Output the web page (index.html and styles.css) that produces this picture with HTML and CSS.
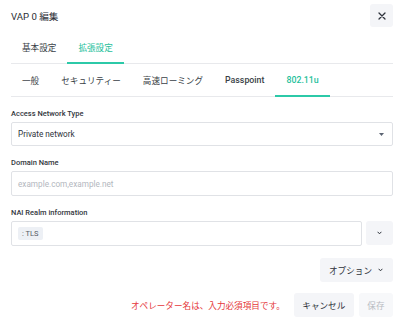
FILE: index.html
```html
<!DOCTYPE html>
<html lang="ja">
<head>
  <meta charset="UTF-8" />
  <meta name="viewport" content="width=device-width, initial-scale=1.0" />
  <title>VAP 0 編集</title>
  <link rel="stylesheet" href="styles.css">
</head>
<body>
  <div class="dialog">
    <!-- Header -->
    <div class="dialog-header">
      <div class="dialog-title">VAP 0 編集</div>
      <button class="icon-btn close-btn" aria-label="close">
        <svg width="8" height="8" viewBox="0 0 8 8"><path d="M1 1L7 7M7 1L1 7" stroke="#2e333b" stroke-width="1.3" stroke-linecap="round"/></svg>
      </button>
    </div>

    <!-- Main tabs -->
    <div class="tabs">
      <div class="tab">基本設定</div>
      <div class="tab active">拡張設定</div>
    </div>

    <!-- Sub tabs -->
    <div class="tabs">
      <div class="tab">一般</div>
      <div class="tab">セキュリティー</div>
      <div class="tab">高速ローミング</div>
      <div class="tab latin">Passpoint</div>
      <div class="tab latin active">802.11u</div>
    </div>

    <div class="form">
      <div class="field">
        <label class="field-label">Access Network Type</label>
        <div class="select">
          <span>Private network</span>
          <svg width="5" height="3" viewBox="0 0 5 3"><path d="M0 0H5L2.5 3Z" fill="#5b6472"/></svg>
        </div>
      </div>

      <div class="field">
        <label class="field-label">Domain Name</label>
        <div class="input tall">
          <span class="placeholder">example.com,example.net</span>
        </div>
      </div>

      <div class="field">
        <label class="field-label">NAI Realm information</label>
        <div class="input-group">
          <div class="input tall">
            <span class="chip">: TLS</span>
          </div>
          <button class="icon-btn side-btn" aria-label="expand">
            <svg width="5" height="4" viewBox="0 0 5 4"><path d="M0.6 0.8L2.5 2.8L4.4 0.8" fill="none" stroke="#2e333b" stroke-width="1"/></svg>
          </button>
        </div>
      </div>

      <div class="row-right">
        <button class="btn options-btn">オプション
          <svg width="5" height="4" viewBox="0 0 5 4"><path d="M0.6 0.8L2.5 2.8L4.4 0.8" fill="none" stroke="#2e333b" stroke-width="1"/></svg>
        </button>
      </div>

      <div class="row-right footer">
        <span class="error">オペレーター名は、入力必須項目です。</span>
        <button class="btn">キャンセル</button>
        <button class="btn disabled">保存</button>
      </div>
    </div>
  </div>
</body>
</html>
```

FILE: styles.css
```css
/* Global */
body {
  margin: 0;
  background: #fff;
  font-family: Roboto, "Noto Sans CJK JP", sans-serif;
  color: #2e333b;
}
button {
  font-family: inherit;
  border: none;
  cursor: pointer;
}
/* Dialog */
.dialog {
  width: 401px;
  height: 326px;
  box-sizing: border-box;
  padding: 0 8px 0 11px;
}
.dialog-header {
  height: 31px;
  display: flex;
  align-items: center;
  justify-content: space-between;
}
.dialog-title {
  font-size: 9.6px;
  color: #2a2e35;
}
.icon-btn {
  display: flex;
  align-items: center;
  justify-content: center;
  background: #f4f5f8;
  border-radius: 3px;
  padding: 0;
}
.close-btn {
  width: 23px;
  height: 23px;
}
/* Tabs */
.tabs {
  display: flex;
  height: 32px;
  border-bottom: 1px solid #e8e9ec;
}
.tabs:first-of-type {
  margin-top: 2px;
}
.tab {
  display: flex;
  align-items: center;
  padding: 0 11px;
  font-size: 8.6px;
  color: #3a3f47;
  margin-bottom: -1px;
  border-bottom: 2px solid transparent;
}
.tab.latin {
  font-size: 8.8px;
  font-weight: 500;
}
.tab.active {
  color: #1fbf9c;
  border-bottom-color: #2cc9a8;
}
/* Form */
.form {
  padding-top: 12px;
}
.field {
  margin-bottom: 12px;
}
.field-label {
  display: block;
  font-size: 7.5px;
  font-weight: 500;
  line-height: 10px;
  margin-bottom: 3px;
  color: #33373e;
}
.select,
.input {
  box-sizing: border-box;
  height: 24px;
  border: 1px solid #e0e2e6;
  border-radius: 2px;
  display: flex;
  align-items: center;
  padding: 0 6px;
  font-size: 8.2px;
}
.input.tall {
  height: 25px;
}
.select {
  justify-content: space-between;
  padding-right: 8px;
}
.placeholder {
  color: #b3b7be;
}
.input-group {
  display: flex;
  gap: 4px;
}
.input-group .input {
  flex: 1;
}
.side-btn {
  width: 27px;
  height: 24px;
}
.chip {
  background: #edf0f5;
  color: #555b66;
  font-size: 7.5px;
  padding: 0 4px;
  border-radius: 2px;
  line-height: 13px;
}
/* Buttons */
.row-right {
  display: flex;
  justify-content: flex-end;
  align-items: center;
  margin-bottom: 11px;
}
.btn {
  height: 24px;
  padding: 0 8.5px;
  background: #f4f5f8;
  border-radius: 3px;
  font-size: 8.6px;
  color: #2e333b;
  display: flex;
  align-items: center;
  gap: 6px;
}
.options-btn {
  padding: 0 10px 0 9px;
}
.footer {
  gap: 5px;
}
.error {
  color: #e5383b;
  font-size: 8.6px;
  margin-right: 4px;
}
.btn.disabled {
  color: #b7bbc2;
  background: #f7f8fa;
  cursor: default;
}
```
